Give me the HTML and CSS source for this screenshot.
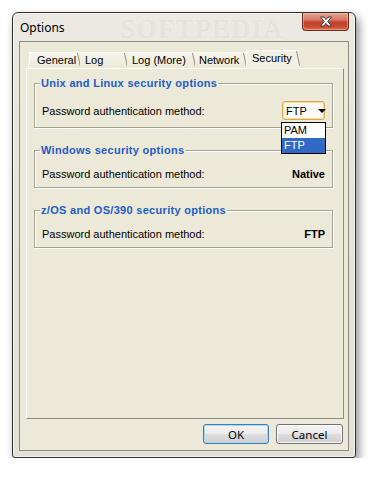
FILE: index.html
```html
<!DOCTYPE html>
<html>
<head>
<meta charset="utf-8">
<title>Options</title>
<link rel="stylesheet" href="styles.css">
</head>
<body>
<div class="window">
  <div class="titlebar">
    <span class="title">Options</span>
    <span class="wm wm-title">SOFTPEDIA</span>
    <div class="close">
      <svg width="14" height="11" viewBox="0 0 14 11"><path d="M1.5 1 H5 L7 3.6 L9 1 H12.5 L8.8 5.5 L12.5 10 H9 L7 7.4 L5 10 H1.5 L5.2 5.5 Z" fill="#fff" stroke="#3b3b3b" stroke-width="1" stroke-linejoin="round"/></svg>
    </div>
  </div>
  <div class="client">
    <div class="tabs">
      <div class="tab first t-general">General</div>
      <div class="tab t-log">Log</div>
      <div class="tab t-logmore">Log (More)</div>
      <div class="tab t-network">Network</div>
      <div class="tab selected t-security">Security</div>
    </div>
    <div class="panel">
      <div class="group g1">
        <div class="legend">Unix and Linux security options</div>
        <div class="row">
          <span>Password authentication method:</span>
          <div class="combo">
            <span>FTP</span><span class="arrow"></span>
            <div class="dropdown">
              <div class="item">PAM</div>
              <div class="item sel">FTP</div>
            </div>
          </div>
        </div>
      </div>
      <div class="group g2">
        <div class="legend">Windows security options</div>
        <div class="row">
          <span>Password authentication method:</span>
          <span class="value">Native</span>
        </div>
      </div>
      <div class="group g3">
        <div class="legend">z/OS and OS/390 security options</div>
        <div class="row">
          <span>Password authentication method:</span>
          <span class="value">FTP</span>
        </div>
      </div>
    </div>
    <div class="buttons">
      <div class="btn default">OK</div>
      <div class="btn cancel">Cancel</div>
    </div>
  </div>
</div>
</body>
</html>
```
FILE: styles.css
```css
* { box-sizing: border-box; }

body {
  margin: 0;
  background: #fff;
  font-family: "Liberation Sans", Arial, sans-serif;
  font-size: 11px;
  color: #000;
}

.window {
  position: relative;
  margin: 12px 0 0 12px;
  width: 344px;
  height: 446px;
  border: 1px solid #2f2f2f;
  border-radius: 6px 6px 3px 3px;
  background: linear-gradient(#ebe9e2, #e6e3da 40%, #e3e0d6);
  box-shadow: 3px 5px 10px rgba(0, 0, 0, 0.45), inset 0 0 0 1px rgba(255,255,255,0.6);
  padding: 0 6px 6px;
  display: flex;
  flex-direction: column;
}

.titlebar {
  position: relative;
  height: 28px;
  display: flex;
  align-items: center;
  padding-left: 1px;
}

.title {
  font-family: "Noto Sans", "Open Sans", sans-serif;
  font-size: 12px;
  position: relative;
  z-index: 1;
}

.close {
  align-self: flex-start;
  margin-left: auto;
  width: 47px;
  height: 18px;
  border: 1px solid #6b2a1d;
  border-top: none;
  border-radius: 0 0 4px 4px;
  background: linear-gradient(#e7a797, #d67561 40%, #c2402a 55%, #c64a31 80%, #dc7357);
  box-shadow: inset 0 0 0 1px rgba(255, 200, 180, 0.45);
  display: flex;
  align-items: center;
  justify-content: center;
  position: relative;
  z-index: 1;
}

.client {
  flex: 1;
  border: 1px solid #8c8a82;
  background: #ece9d8;
  padding: 8px 4px 6px 6px;
  display: flex;
  flex-direction: column;
}

.tabs {
  height: 18px;
  display: flex;
  align-items: flex-end;
  padding-left: 3px;
  position: relative;
  z-index: 2;
}

.tab {
  position: relative;
  height: 16px;
  line-height: 14px;
  background: linear-gradient(#f6f4ec, #ece9d8);
  border-top: 1px solid #fff;
  white-space: nowrap;
}

.tab::after {
  content: "";
  position: absolute;
  right: 2px;
  top: 0;
  width: 1px;
  height: 15px;
  background: #8f8c80;
  transform: skewX(12deg);
  transform-origin: top;
}

.tab.first::before {
  content: "";
  position: absolute;
  left: 0;
  top: 0;
  width: 1px;
  height: 15px;
  background: #fff;
  transform: skewX(-8deg);
}

.t-general { width: 51px; padding-left: 8px; }
.t-log { width: 47px; padding-left: 5px; }
.t-logmore { width: 68px; padding-left: 5px; }
.t-network { width: 51px; padding-left: 4px; }

.tab.selected {
  height: 19px;
  margin-bottom: -1px;
  background: #f1efe6;
  border-left: 1px solid #fff;
  line-height: 15px;
  padding-bottom: 2px;
}

.t-security { width: 53px; padding-left: 5px; }

.panel {
  flex: 1;
  border: 1px solid;
  border-color: #fff #8e8c84 #8e8c84 #fff;
  background: #ece9d8;
  padding: 14px 10px 0 7px;
  display: flex;
  flex-direction: column;
  position: relative;
}

.group {
  border: 1px solid #a6a497;
  box-shadow: 1px 1px 0 #fff, inset 1px 1px 0 #fff;
  padding: 0 7px;
}

.g1 { height: 45px; }
.g2, .g3 { height: 38px; margin-top: 22px; }

.legend {
  display: block;
  width: max-content;
  margin: -7px 0 0 -2px;
  padding: 0 1px;
  height: 13px;
  line-height: 13px;
  background: #ece9d8;
  color: #215dc6;
  font-weight: bold;
  letter-spacing: 0.3px;
}

.row {
  display: flex;
  align-items: center;
  justify-content: space-between;
  height: 19px;
  margin-top: 7px;
}

.g1 .row { margin-top: 11px; }

.value { font-weight: bold; }

.combo {
  position: relative;
  width: 43px;
  height: 19px;
  border: 1px solid #d9a94a;
  border-radius: 3px;
  box-shadow: inset 0 0 0 1px #f7dc95;
  background: #fdfbf3;
  display: flex;
  align-items: center;
  padding-left: 3px;
  z-index: 3;
}

.arrow {
  margin-left: 11px;
  width: 0;
  height: 0;
  border-left: 4px solid transparent;
  border-right: 4px solid transparent;
  border-top: 4px solid #000;
}

.dropdown {
  position: absolute;
  left: -2px;
  top: 20px;
  width: 45px;
  border: 1px solid #000;
  background: #fff;
}

.item {
  height: 15px;
  line-height: 15px;
  padding-left: 2px;
}

.item.sel {
  background: #316ac5;
  color: #fff;
}

.buttons {
  display: flex;
  justify-content: flex-end;
  gap: 7px;
  margin-top: 5px;
  height: 20px;
  padding-right: 1px;
}

.btn {
  height: 20px;
  border-radius: 3px;
  display: flex;
  align-items: center;
  justify-content: center;
  font-family: "Noto Sans", "Open Sans", sans-serif;
  font-size: 11.5px;
}

.default {
  width: 66px;
  border: 1px solid #3c7fb1;
  box-shadow: inset 0 0 0 1px #a8d7f3;
  background: linear-gradient(#f4f4f4, #ececec 50%, #dddddd 50%, #d0d0d0);
}

.cancel {
  width: 67px;
  border: 1px solid #707070;
  box-shadow: inset 0 0 0 1px #fcfcfc;
  background: linear-gradient(#f2f2f2, #ebebeb 50%, #dddddd 50%, #cfcfcf);
}

.wm {
  position: absolute;
  font-family: "Liberation Serif", serif;
  font-weight: bold;
  white-space: nowrap;
  pointer-events: none;
}

.wm-title {
  left: 101px;
  top: 1px;
  font-size: 27px;
  letter-spacing: 1px;
  color: rgba(140, 128, 105, 0.14);
  text-shadow: 0 0 2px rgba(255, 255, 255, 0.5);
  z-index: 0;
}
```
